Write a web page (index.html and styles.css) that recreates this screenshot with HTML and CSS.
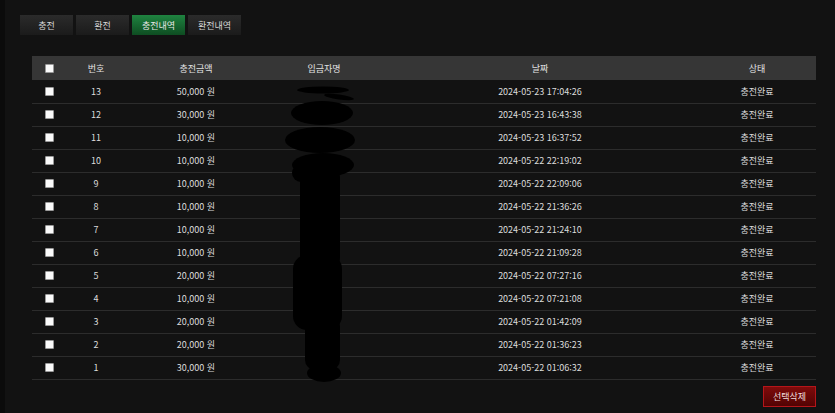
FILE: index.html
```html
<!DOCTYPE html>
<html lang="ko">
<head>
<meta charset="utf-8">
<link rel="stylesheet" href="styles.css">
</head>
<body>
<div class="page">
  <div class="strip"></div>
  <div class="content">
    <div class="tabs">
      <button class="tab">충전</button>
      <button class="tab">환전</button>
      <button class="tab active">충전내역</button>
      <button class="tab">환전내역</button>
    </div>
    <div class="table-wrap">
      <table class="list">
        <colgroup>
          <col class="c-chk"><col class="c-no"><col class="c-amt"><col class="c-name"><col class="c-date"><col class="c-state">
        </colgroup>
        <thead>
          <tr><th><input type="checkbox" class="chk"></th><th>번호</th><th>충전금액</th><th>입금자명</th><th>날짜</th><th>상태</th></tr>
        </thead>
        <tbody>
          <tr><td><input type="checkbox" class="chk"></td><td>13</td><td>50,000 원</td><td></td><td>2024-05-23 17:04:26</td><td>충전완료</td></tr>
          <tr><td><input type="checkbox" class="chk"></td><td>12</td><td>30,000 원</td><td></td><td>2024-05-23 16:43:38</td><td>충전완료</td></tr>
          <tr><td><input type="checkbox" class="chk"></td><td>11</td><td>10,000 원</td><td></td><td>2024-05-23 16:37:52</td><td>충전완료</td></tr>
          <tr><td><input type="checkbox" class="chk"></td><td>10</td><td>10,000 원</td><td></td><td>2024-05-22 22:19:02</td><td>충전완료</td></tr>
          <tr><td><input type="checkbox" class="chk"></td><td>9</td><td>10,000 원</td><td></td><td>2024-05-22 22:09:06</td><td>충전완료</td></tr>
          <tr><td><input type="checkbox" class="chk"></td><td>8</td><td>10,000 원</td><td></td><td>2024-05-22 21:36:26</td><td>충전완료</td></tr>
          <tr><td><input type="checkbox" class="chk"></td><td>7</td><td>10,000 원</td><td></td><td>2024-05-22 21:24:10</td><td>충전완료</td></tr>
          <tr><td><input type="checkbox" class="chk"></td><td>6</td><td>10,000 원</td><td></td><td>2024-05-22 21:09:28</td><td>충전완료</td></tr>
          <tr><td><input type="checkbox" class="chk"></td><td>5</td><td>20,000 원</td><td></td><td>2024-05-22 07:27:16</td><td>충전완료</td></tr>
          <tr><td><input type="checkbox" class="chk"></td><td>4</td><td>10,000 원</td><td></td><td>2024-05-22 07:21:08</td><td>충전완료</td></tr>
          <tr><td><input type="checkbox" class="chk"></td><td>3</td><td>20,000 원</td><td></td><td>2024-05-22 01:42:09</td><td>충전완료</td></tr>
          <tr><td><input type="checkbox" class="chk"></td><td>2</td><td>20,000 원</td><td></td><td>2024-05-22 01:36:23</td><td>충전완료</td></tr>
          <tr><td><input type="checkbox" class="chk"></td><td>1</td><td>30,000 원</td><td></td><td>2024-05-22 01:06:32</td><td>충전완료</td></tr>
        </tbody>
      </table>
      <svg class="censor" width="80" height="330" viewBox="0 0 80 330">
        <g fill="#000">
          <ellipse cx="39" cy="34" rx="26" ry="3.5"/>
          <ellipse cx="55" cy="41" rx="15" ry="2.5" transform="rotate(8 55 41)"/>
          <ellipse cx="38" cy="57" rx="31" ry="12"/>
          <ellipse cx="36" cy="84" rx="35" ry="13"/>
          <ellipse cx="39" cy="109" rx="31" ry="12"/>
          <circle cx="17" cy="117" r="9"/>
          <rect x="16" y="110" width="40" height="104" rx="12"/>
          <rect x="9" y="199" width="49" height="75" rx="14"/>
          <rect x="21" y="260" width="35" height="54" rx="10"/>
          <ellipse cx="40" cy="317" rx="17" ry="9"/>
        </g>
      </svg>
    </div>
    <div class="actions">
      <button class="btn-del">선택삭제</button>
    </div>
  </div>
</div>
</body>
</html>
```

FILE: styles.css
```css
* { box-sizing: border-box; }
html, body {
  margin: 0;
  padding: 0;
  background: #121212;
}
body {
  font-family: "Noto Sans CJK KR", "Noto Sans", sans-serif;
  font-size: 9px;
  color: #dcdcdc;
}
.page {
  display: flex;
  min-height: 413px;
}
.strip {
  width: 5px;
  flex: 0 0 5px;
  background: #0b0b0b;
}
.content {
  flex: 1;
  padding: 15px 19px 0 15px;
}
.tabs {
  display: flex;
  gap: 3px;
  height: 20px;
}
.tab {
  width: 53px;
  height: 20px;
  padding: 0;
  border: 0;
  font-family: inherit;
  font-size: 9px;
  color: #d8d8d8;
  background: linear-gradient(#2b2b2b, #1b1b1b);
  cursor: pointer;
}
.tab.active {
  background: linear-gradient(#1f8340, #0e4d22);
  color: #e6e6e6;
}
.table-wrap {
  position: relative;
  margin: 21px 0 0 12px;
  width: 784px;
}
.list {
  width: 784px;
  border-collapse: collapse;
  table-layout: fixed;
}
.c-chk { width: 34px; }
.c-no { width: 60px; }
.c-amt { width: 140px; }
.c-name { width: 116px; }
.c-date { width: 316px; }
.c-state { width: 118px; }
.list th {
  height: 24px;
  background: #363636;
  font-weight: normal;
  color: #e2e2e2;
  text-align: center;
  padding: 0;
}
.list td {
  height: 23px;
  text-align: center;
  padding: 0;
  border-bottom: 1px solid #2c2c2c;
  color: #dcdcdc;
}
.chk {
  appearance: none;
  -webkit-appearance: none;
  width: 9px;
  height: 9px;
  margin: 0;
  background: #fafafa;
  border: 1px solid #9a9a9a;
  border-radius: 1px;
  vertical-align: middle;
  display: inline-block;
  position: relative;
  top: -1px;
}
.censor {
  position: absolute;
  left: 252px;
  top: 0;
}
.actions {
  display: flex;
  justify-content: flex-end;
  padding-top: 6px;
  width: 796px;
}
.btn-del {
  width: 53px;
  height: 21px;
  padding: 0;
  font-family: inherit;
  font-size: 9px;
  color: #f0dede;
  background: linear-gradient(#7e0b0b, #520303);
  border: 1px solid #b5151a;
}
```
